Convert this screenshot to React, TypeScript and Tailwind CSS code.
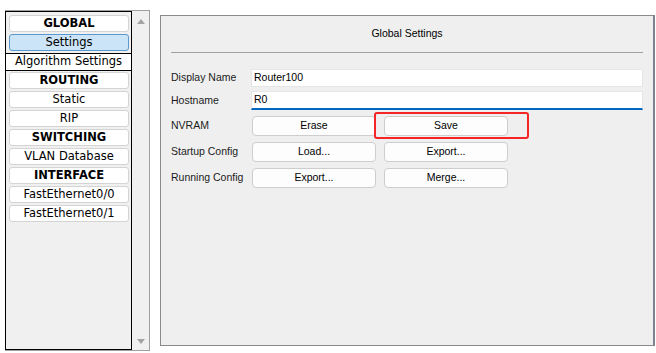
const navItems = [
  { label: "GLOBAL", kind: "header" },
  { label: "Settings", kind: "selected" },
  { label: "Algorithm Settings", kind: "focused" },
  { label: "ROUTING", kind: "header" },
  { label: "Static", kind: "item" },
  { label: "RIP", kind: "item" },
  { label: "SWITCHING", kind: "header" },
  { label: "VLAN Database", kind: "item" },
  { label: "INTERFACE", kind: "header" },
  { label: "FastEthernet0/0", kind: "item" },
  { label: "FastEthernet0/1", kind: "item" },
];

const NavItem = ({ label, kind }: { label: string; kind: string }) => {
  if (kind === "focused") {
    return (
      <div className="h-[18px] -ml-[4px] -mr-[3px] -my-[0.5px] flex items-center justify-center bg-white border border-black text-[11.5px] text-black">
        {label}
      </div>
    );
  }
  const base = "h-[17px] flex items-center justify-center rounded-[3px] border text-[11.5px] text-black";
  if (kind === "selected") {
    return <div className={base + " bg-[#cce4f7] border-[#5b98cf]"}>{label}</div>;
  }
  if (kind === "header") {
    return <div className={base + " bg-white border-[#d4d4d4] font-bold"}>{label}</div>;
  }
  return <div className={base + " bg-white border-[#d4d4d4]"}>{label}</div>;
};

const Btn = ({ children }: { children: string }) => (
  <div className="w-[124px] h-[20px] flex items-center justify-center rounded-[4px] border border-[#cdcdcd] bg-[#fdfdfd] text-black">
    {children}
  </div>
);

const Row = ({ label, children }: { label: string; children: React.ReactNode }) => (
  <div className="flex items-center">
    <div className="w-[80px] shrink-0 text-[#1b1b1b]">{label}</div>
    {children}
  </div>
);

export default function App() {
  return (
    <div className="w-[656px] h-[353px] bg-white flex items-start gap-[10px] pl-[5px] pt-[10px] overflow-hidden">
      <div
        className="flex w-[145px] h-[341px] border border-[#a0a0a0] bg-[#f0f0f0]"
        style={{ fontFamily: '"DejaVu Sans", Verdana, sans-serif' }}
      >
        <div className="w-[127px] -ml-px border border-black flex flex-col gap-[2px] pt-[3px] pl-[3px] pr-[2px] bg-[#f0f0f0]">
          {navItems.map((it) => (
            <NavItem key={it.label} label={it.label} kind={it.kind} />
          ))}
        </div>
        <div className="flex-1 flex flex-col items-center justify-between pt-[8px] pb-[6px]">
          <svg width="8" height="5" viewBox="0 0 8 5">
            <polygon points="0,5 8,5 4,0" fill="#a3a3a3" />
          </svg>
          <svg width="8" height="5" viewBox="0 0 8 5">
            <polygon points="0,0 8,0 4,5" fill="#a3a3a3" />
          </svg>
        </div>
      </div>

      <div
        className="mt-[5px] w-[495px] h-[331px] border border-[#8a8a8a] border-r-2 border-r-[#7f8190] bg-[#efefef] px-[10px] text-[10.5px]"
        style={{ fontFamily: '"Liberation Sans", Arial, sans-serif' }}
      >
        <div className="h-[36px] flex items-center justify-center text-black">Global Settings</div>
        <div className="border-t border-[#a0a0a0]" />
        <div className="flex flex-col mt-[16px]">
          <Row label="Display Name">
            <div className="flex-1 h-[18px] bg-white border border-[#e6e6e6] flex items-center pl-[2px] text-black">
              Router100
            </div>
          </Row>
          <div className="mt-[4px]">
            <Row label="Hostname">
              <div className="flex-1 h-[19px] bg-white border border-[#e6e6e6] border-b-2 border-b-[#0067c0] flex items-center pl-[2px] text-black">
                R0
              </div>
            </Row>
          </div>
          <div className="mt-[6px] flex flex-col gap-[6px]">
            <Row label="NVRAM">
              <div className="flex gap-[8px] ml-px">
                <Btn>Erase</Btn>
                <div className="relative">
                  <Btn>Save</Btn>
                  <span className="absolute -left-[10px] -right-[21px] -top-[4px] -bottom-[3px] border-2 border-[#f52525] rounded-[3px]" />
                </div>
              </div>
            </Row>
            <Row label="Startup Config">
              <div className="flex gap-[8px] ml-px">
                <Btn>Load...</Btn>
                <Btn>Export...</Btn>
              </div>
            </Row>
            <Row label="Running Config">
              <div className="flex gap-[8px] ml-px">
                <Btn>Export...</Btn>
                <Btn>Merge...</Btn>
              </div>
            </Row>
          </div>
        </div>
      </div>
    </div>
  );
}
